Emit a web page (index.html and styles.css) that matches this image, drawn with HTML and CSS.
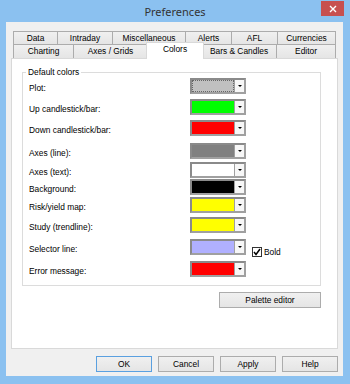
FILE: index.html
```html
<!DOCTYPE html>
<html lang="en">
<head>
<meta charset="UTF-8">
<meta name="viewport" content="width=device-width, initial-scale=1.0">
<title>Preferences</title>
<link rel="stylesheet" href="styles.css">
</head>
<body>
<div class="window">
  <div class="titlebar">
    <span></span>
    <span class="title">Preferences</span>
    <span class="close">
      <svg width="8" height="8" viewBox="0 0 8 8"><path d="M1 1L7 7M7 1L1 7" stroke="#fff" stroke-width="1.4"/></svg>
    </span>
  </div>

  <div class="client">
    <div class="tabs">
      <div class="tabrow row1">
        <div class="tab">Data</div>
        <div class="tab">Intraday</div>
        <div class="tab">Miscellaneous</div>
        <div class="tab">Alerts</div>
        <div class="tab">AFL</div>
        <div class="tab last">Currencies</div>
      </div>
      <div class="tabrow row2">
        <div class="tab">Charting</div>
        <div class="tab">Axes / Grids</div>
        <div class="tab active">Colors</div>
        <div class="tab">Bars &amp; Candles</div>
        <div class="tab last">Editor</div>
      </div>
    </div>

    <div class="panel">
      <fieldset class="group">
        <legend>Default colors</legend>
        <div class="color-grid">
          <div class="crow">
            <span class="label">Plot:</span>
            <div class="combo focus"><span class="swatch sw-silver"></span><span class="drop"><i></i></span></div>
          </div>
          <div class="crow">
            <span class="label">Up candlestick/bar:</span>
            <div class="combo"><span class="swatch sw-lime"></span><span class="drop"><i></i></span></div>
          </div>
          <div class="crow">
            <span class="label">Down candlestick/bar:</span>
            <div class="combo"><span class="swatch sw-red"></span><span class="drop"><i></i></span></div>
          </div>
          <div class="crow">
            <span class="label">Axes (line):</span>
            <div class="combo"><span class="swatch sw-gray"></span><span class="drop"><i></i></span></div>
          </div>
          <div class="crow">
            <span class="label">Axes (text):</span>
            <div class="combo"><span class="swatch sw-white"></span><span class="drop"><i></i></span></div>
          </div>
          <div class="crow">
            <span class="label">Background:</span>
            <div class="combo"><span class="swatch sw-black"></span><span class="drop"><i></i></span></div>
          </div>
          <div class="crow">
            <span class="label">Risk/yield map:</span>
            <div class="combo"><span class="swatch sw-yellow"></span><span class="drop"><i></i></span></div>
          </div>
          <div class="crow">
            <span class="label">Study (trendline):</span>
            <div class="combo"><span class="swatch sw-yellow"></span><span class="drop"><i></i></span></div>
          </div>
          <div class="crow">
            <span class="label">Selector line:</span>
            <div class="combo"><span class="swatch sw-lavender"></span><span class="drop"><i></i></span></div>
            <span class="check">
              <svg width="8" height="8" viewBox="0 0 8 8"><path d="M1 4L3 6.5L7 1" fill="none" stroke="#000" stroke-width="1.5"/></svg>
            </span>
            <span class="check-label">Bold</span>
          </div>
          <div class="crow">
            <span class="label">Error message:</span>
            <div class="combo"><span class="swatch sw-red"></span><span class="drop"><i></i></span></div>
          </div>
        </div>
      </fieldset>
      <div class="palette-row">
        <button class="btn palette">Palette editor</button>
      </div>
    </div>

    <div class="buttons">
      <button class="btn default">OK</button>
      <button class="btn">Cancel</button>
      <button class="btn">Apply</button>
      <button class="btn">Help</button>
    </div>
  </div>
</div>
</body>
</html>
```

FILE: styles.css
```css
body {
  margin: 0;
  background: #8bc1f0;
  font-family: "Liberation Sans", Arial, sans-serif;
  font-size: 8.4px;
  color: #000;
}

.window {
  width: 350px;
  height: 384px;
  display: flex;
  flex-direction: column;
  background: #8bc1f0;
}

/* title bar */
.titlebar {
  height: 22px;
  display: grid;
  grid-template-columns: 1fr auto 1fr;
  align-items: start;
}
.title {
  font-family: "Noto Sans", "Liberation Sans", sans-serif;
  font-size: 11px;
  color: #333;
  line-height: 22px;
  padding-top: 1px;
}
.close {
  justify-self: end;
  width: 23px;
  height: 15px;
  margin: 1px 6px 0 0;
  background: #c75050;
  display: flex;
  align-items: center;
  justify-content: center;
}

/* client area */
.client {
  margin: 0 7px 8px 6px;
  height: 354px;
  box-sizing: border-box;
  background: #f0f0f0;
  padding: 9px 5px 0 5px;
}

.tabs {
  padding: 0 2px;
}
.tabrow {
  display: grid;
}
.row1 {
  grid-template-columns: 44px 55px 73px 46px 46px 59px;
  height: 13px;
}
.row2 {
  grid-template-columns: 60px 74px 55px 74px 60px;
  height: 14px;
}
.tab {
  box-sizing: border-box;
  border: 1px solid #acacac;
  border-right: none;
  border-bottom: none;
  background: linear-gradient(#f0f0f0, #e5e5e5);
  text-align: center;
  line-height: 12px;
  white-space: nowrap;
}
.tab.last {
  border-right: 1px solid #acacac;
}
.tab.active {
  position: relative;
  z-index: 1;
  margin: -2px -2px -1px -1px;
  border: 1px solid #d9d9d9;
  border-bottom: none;
  background: #fff;
  line-height: 13px;
}
.tab.active + .tab {
  border-left: none;
}

.panel {
  height: 291px;
  box-sizing: border-box;
  background: #fff;
  border: 1px solid #d9d9d9;
  display: flex;
  flex-direction: column;
}

/* group box */
.group {
  margin: 8px 16px 0 10px;
  padding: 0 0 8px 6px;
  border: 1px solid #dcdcdc;
  min-width: 0;
}
.group legend {
  margin-left: -3px;
  padding: 0 2px;
  line-height: 10px;
}

.color-grid {
  display: grid;
  grid-template-rows: 21px 21px 23px 19px 17px 18px 20px 22px 22px 16px;
  padding-top: 1px;
}
.crow {
  display: flex;
  align-items: flex-start;
}
.label {
  width: 161px;
  line-height: 16px;
  padding-top: 2px;
}

.combo {
  width: 56px;
  height: 16px;
  box-sizing: border-box;
  display: flex;
  border: 2px solid #a0a0a0;
  border-top-color: #8a8a8a;
  border-left-color: #8a8a8a;
}
.combo.focus .swatch {
  outline: 1px dotted #666;
  outline-offset: -1px;
}
.swatch {
  flex: 1;
}
.drop {
  width: 9px;
  background: #f7f7f7;
  border-left: 1px solid #a0a0a0;
  display: flex;
  align-items: center;
  justify-content: center;
}
.drop i {
  width: 0;
  height: 0;
  border-left: 2px solid transparent;
  border-right: 2px solid transparent;
  border-top: 2px solid #000;
}

.sw-silver { background: #c0c0c0; }
.sw-lime { background: #00ff00; }
.sw-red { background: #ff0000; }
.sw-gray { background: #808080; }
.sw-white { background: #fff; }
.sw-black { background: #000; }
.sw-yellow { background: #ffff00; }
.sw-lavender { background: #b0b0ff; }

.check {
  width: 10px;
  height: 10px;
  box-sizing: border-box;
  margin: 8px 0 0 6px;
  border: 1px solid #333;
  background: #fff;
  display: flex;
  align-items: center;
  justify-content: center;
}
.check-label {
  margin: 7px 0 0 2px;
  line-height: 12px;
}

.palette-row {
  display: flex;
  justify-content: flex-end;
  padding: 6px 16px 0 0;
}

.btn {
  height: 16px;
  box-sizing: border-box;
  padding: 0;
  font-family: inherit;
  font-size: inherit;
  color: #000;
  border: 1px solid #acacac;
  background: linear-gradient(#f0f0f0, #e5e5e5);
  border-radius: 0;
}
.palette {
  width: 102px;
}

.buttons {
  display: flex;
  justify-content: flex-end;
  gap: 6px;
  margin-top: 7px;
}
.buttons .btn {
  width: 56px;
}
.btn.default {
  border-color: #5aa0e0;
}
```
